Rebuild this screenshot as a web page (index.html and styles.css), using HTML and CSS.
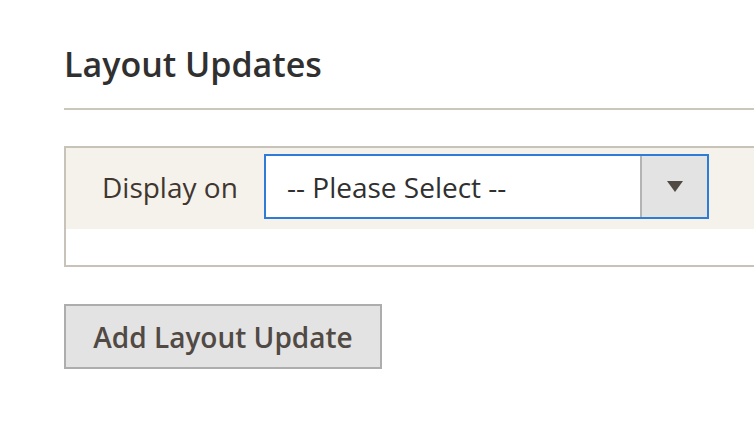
FILE: index.html
```html
<!DOCTYPE html>
<html>
<head>
<meta charset="utf-8">
<link rel="stylesheet" href="styles.css">
</head>
<body>
<div class="page">
  <div class="section-title">
    <h2 class="title">Layout Updates</h2>
  </div>
  <div class="update-box">
    <div class="field-row">
      <label class="field-label">Display on</label>
      <div class="select">
        <span class="select-value">-- Please Select --</span>
        <span class="select-btn">
          <svg width="16" height="11" viewBox="0 0 16 11"><polygon points="0,0 16,0 8,11" fill="#514943"/></svg>
        </span>
      </div>
    </div>
    <div class="box-bottom"></div>
  </div>
  <button class="add-btn">Add Layout Update</button>
</div>
</body>
</html>
```
FILE: styles.css
```css
html, body {
  margin: 0;
  padding: 0;
  background: #ffffff;
  overflow: hidden;
}
body {
  width: 754px;
  height: 428px;
  font-family: "Open Sans", "Liberation Sans", sans-serif;
}
.page {
  padding-left: 64px;
  padding-top: 40px;
}
.section-title {
  border-bottom: 2px solid #ccc7bc;
  padding-bottom: 20px;
  margin-bottom: 36px;
}
.title {
  margin: 0;
  font-size: 34px;
  line-height: 48px;
  font-weight: 600;
  color: #303030;
}
.update-box {
  border: 2px solid #c8c3b8;
  border-right: none;
  margin-right: -10px;
}
.field-row {
  background: #f5f2ec;
  display: flex;
  align-items: center;
  padding: 6px 0 10px 36px;
}
.field-label {
  font-size: 28px;
  color: #41362f;
  width: 162px;
}
.select {
  box-sizing: border-box;
  width: 445px;
  height: 65px;
  border: 2px solid #2f7bd8;
  background: #ffffff;
  display: flex;
  align-items: stretch;
}
.select-value {
  flex: 1;
  display: flex;
  align-items: center;
  padding-left: 21px;
  font-size: 28px;
  color: #303030;
}
.select-btn {
  width: 65px;
  border-left: 2px solid #b3b3b3;
  background: #e3e3e3;
  display: flex;
  align-items: center;
  justify-content: center;
}
.box-bottom {
  height: 36px;
}
.add-btn {
  margin-top: 37px;
  box-sizing: border-box;
  width: 318px;
  height: 65px;
  border: 2px solid #adadad;
  background: #e3e3e3;
  font-family: "Open Sans", "Liberation Sans", sans-serif;
  font-size: 28px;
  font-weight: 600;
  color: #514943;
  padding: 0;
  display: block;
}
```
